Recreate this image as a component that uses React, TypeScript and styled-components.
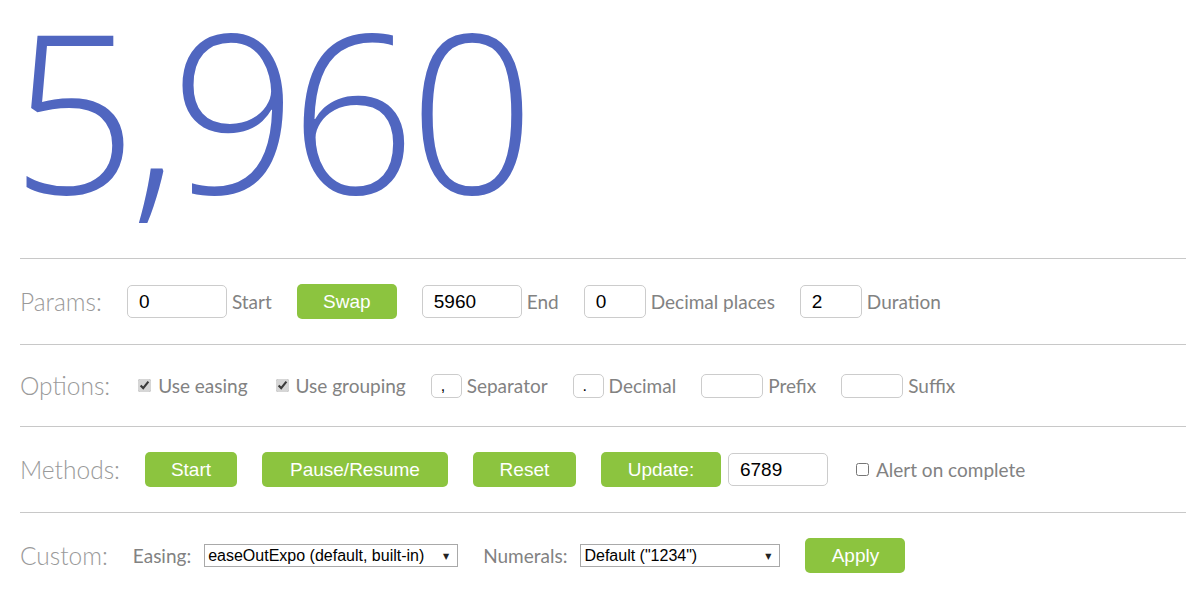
import React, { useState } from 'react';
import styled, { createGlobalStyle } from 'styled-components';

const GlobalStyle = createGlobalStyle`
    html, body {
        margin: 0;
        padding: 0;
        background: #fff;
        overflow: hidden;
    }
    body {
        font-family: Lato, "Open Sans", sans-serif;
    }
`;

const Page = styled.div`
    width: 1186px;
    height: 589px;
    padding-left: 20px;
    box-sizing: border-box;
`;

const Counter = styled.h1`
    margin: 0 0 0 -9px;
    height: 258px;
    font-family: "Open Sans", Lato, sans-serif;
    font-weight: 300;
    font-size: 221px;
    line-height: 218px;
    letter-spacing: -7px;
    color: #5066c0;
    white-space: nowrap;
`;

const Row = styled.div<{ $h: number }>`
    display: flex;
    align-items: center;
    gap: 25px;
    height: ${p => p.$h}px;
    border-top: 1px solid #c8c8c8;
    box-sizing: border-box;
    flex-shrink: 0;
`;

const RowLabel = styled.span`
    font-family: Lato, sans-serif;
    font-weight: 300;
    font-size: 24.5px;
    color: #9a9a9a;
`;

const Group = styled.label<{ $gap?: number }>`
    display: flex;
    align-items: center;
    gap: ${p => p.$gap ?? 5}px;
`;

const Caption = styled.span`
    font-family: Lato, sans-serif;
    font-size: 19px;
    color: #828282;
`;

const TextInput = styled.input<{ $w: number; $small?: boolean }>`
    width: ${p => p.$w}px;
    height: ${p => (p.$small ? 24 : 33)}px;
    box-sizing: border-box;
    margin: 0;
    padding: 0 ${p => (p.$small ? 9 : 11)}px;
    border: 1px solid #cccccc;
    border-radius: 5px;
    font-family: "Liberation Sans", Arial, sans-serif;
    font-size: ${p => (p.$small ? 16 : 19)}px;
    color: #000;
    outline: none;
`;

const Button = styled.button<{ $w: number }>`
    width: ${p => p.$w}px;
    height: 35px;
    margin: 0;
    padding: 0;
    border: none;
    border-radius: 5px;
    background: #8cc43f;
    color: #fff;
    font-family: "Liberation Sans", Arial, sans-serif;
    font-size: 19px;
    cursor: pointer;
`;

const Check = styled.input`
    width: 13px;
    height: 13px;
    margin: 0 2px 0 3px;
    accent-color: #d6d6d6;
`;

const SelectBox = styled.span<{ $w: number }>`
    position: relative;
    display: inline-block;
    width: ${p => p.$w}px;
    height: 23px;
`;

const Select = styled.select`
    appearance: none;
    width: 100%;
    height: 100%;
    margin: 0;
    padding: 0 0 0 3px;
    border: 1px solid #a9a9a9;
    border-radius: 0;
    background: #fff;
    font-family: "Liberation Sans", Arial, sans-serif;
    font-size: 16px;
    color: #000;
    outline: none;
`;

const Arrow = styled.span`
    position: absolute;
    right: 9px;
    top: 50%;
    transform: translateY(-50%);
    font-family: "DejaVu Sans", sans-serif;
    font-size: 8px;
    color: #222;
    pointer-events: none;
`;

const Dropdown = ({ w, label }: { w: number; label: string }) => (
    <SelectBox $w={w}>
        <Select defaultValue="a">
            <option value="a">{label}</option>
        </Select>
        <Arrow>▼</Arrow>
    </SelectBox>
);

export default function App() {
    const [easing, setEasing] = useState(true);
    const [grouping, setGrouping] = useState(true);

    return (
        <Page>
            <GlobalStyle />
            <Counter>5,960</Counter>

            <Row $h={86}>
                <RowLabel>Params:</RowLabel>
                <Group>
                    <TextInput $w={100} defaultValue="0" />
                    <Caption>Start</Caption>
                </Group>
                <Button $w={100}>Swap</Button>
                <Group>
                    <TextInput $w={100} defaultValue="5960" />
                    <Caption>End</Caption>
                </Group>
                <Group>
                    <TextInput $w={62} defaultValue="0" />
                    <Caption>Decimal places</Caption>
                </Group>
                <Group>
                    <TextInput $w={62} defaultValue="2" />
                    <Caption>Duration</Caption>
                </Group>
            </Row>

            <Row $h={82}>
                <RowLabel>Options:</RowLabel>
                <Group>
                    <Check type="checkbox" checked={easing} onChange={() => setEasing(!easing)} />
                    <Caption>Use easing</Caption>
                </Group>
                <Group>
                    <Check type="checkbox" checked={grouping} onChange={() => setGrouping(!grouping)} />
                    <Caption>Use grouping</Caption>
                </Group>
                <Group>
                    <TextInput $w={31} $small defaultValue="," />
                    <Caption>Separator</Caption>
                </Group>
                <Group>
                    <TextInput $w={31} $small defaultValue="." />
                    <Caption>Decimal</Caption>
                </Group>
                <Group>
                    <TextInput $w={62} $small defaultValue="" />
                    <Caption>Prefix</Caption>
                </Group>
                <Group>
                    <TextInput $w={62} $small defaultValue="" />
                    <Caption>Suffix</Caption>
                </Group>
            </Row>

            <Row $h={86}>
                <RowLabel>Methods:</RowLabel>
                <Button $w={92}>Start</Button>
                <Button $w={186}>Pause/Resume</Button>
                <Button $w={103}>Reset</Button>
                <Group $gap={7}>
                    <Button $w={120}>Update:</Button>
                    <TextInput $w={100} defaultValue="6789" />
                </Group>
                <Group>
                    <Check type="checkbox" />
                    <Caption>Alert on complete</Caption>
                </Group>
            </Row>

            <Row $h={86}>
                <RowLabel>Custom:</RowLabel>
                <Group $gap={13}>
                    <Caption>Easing:</Caption>
                    <Dropdown w={254} label="easeOutExpo (default, built-in)" />
                </Group>
                <Group $gap={13}>
                    <Caption>Numerals:</Caption>
                    <Dropdown w={200} label={'Default ("1234")'} />
                </Group>
                <Button $w={100}>Apply</Button>
            </Row>
        </Page>
    );
}
